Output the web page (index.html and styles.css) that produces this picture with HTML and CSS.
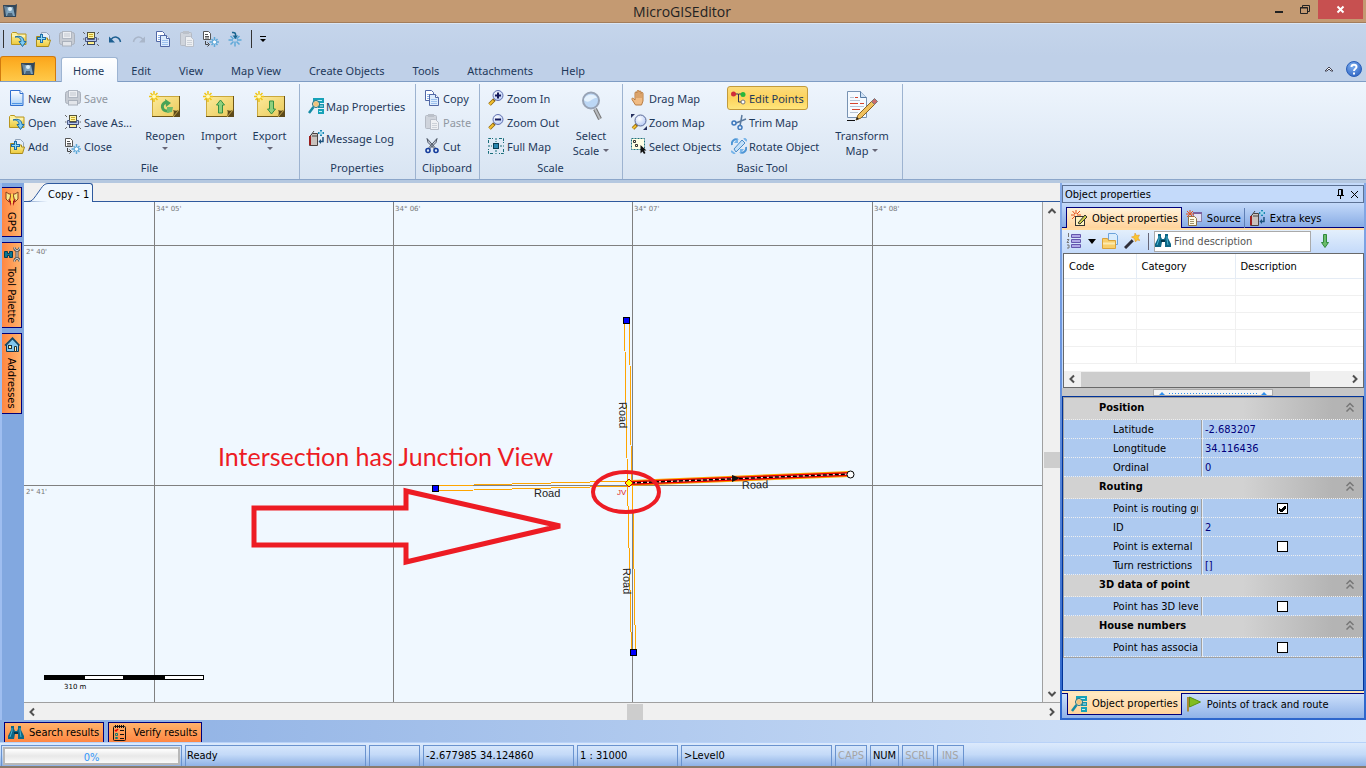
FILE: index.html
```html
<!DOCTYPE html>
<html lang="en">
<head>
    <meta charset="UTF-8">
    <meta name="viewport" content="width=device-width, initial-scale=1.0">
    <title>MicroGISEditor</title>
    <link rel="stylesheet" href="styles.css">
</head>
<body>
    <!-- Icon sprite -->
    <svg class="sprite" xmlns="http://www.w3.org/2000/svg" aria-hidden="true">
        <defs>
            <linearGradient id="g-page" x1="0" y1="0" x2="0" y2="1"><stop offset="0" stop-color="#ffffff"/><stop offset="1" stop-color="#a9d0f7"/></linearGradient>
            <linearGradient id="g-folder" x1="0" y1="0" x2="0" y2="1"><stop offset="0" stop-color="#fff6a8"/><stop offset="1" stop-color="#ecc93c"/></linearGradient>
            <linearGradient id="g-note" x1="0" y1="0" x2="1" y2="1"><stop offset="0" stop-color="#fdeb9c"/><stop offset="1" stop-color="#e9c95a"/></linearGradient>
            <radialGradient id="g-lens" cx=".4" cy=".35" r=".7"><stop offset="0" stop-color="#ffffff"/><stop offset="1" stop-color="#b3c8f5"/></radialGradient>
            <radialGradient id="g-help" cx=".4" cy=".3" r=".8"><stop offset="0" stop-color="#7fb0f0"/><stop offset="1" stop-color="#2a5fc0"/></radialGradient>
        </defs>
        <symbol id="i-app" viewBox="0 0 16 16">
            <path d="M1 2h12l2-1-1 13H2z" fill="#33475a"/><path d="M2 3l2 10h1l1-9z" fill="#6d879c"/><path d="M5 4h6l2 9H4z" fill="#7fa3bd"/><circle cx="8" cy="6" r="2" fill="#dcebf2"/><path d="M6 10h4l1 3H5z" fill="#4b667c"/>
        </symbol>
        <symbol id="i-new" viewBox="0 0 16 16">
            <path d="M1.500 .5h9.500l3 3v12h-12.500z" fill="url(#g-page)" stroke="#2f6fd0"/><path d="M11 .5v3h3" fill="#fff" stroke="#2f6fd0"/><path d="M3 13.500h10" stroke="#4e95e6"/>
        </symbol>
        <symbol id="i-open" viewBox="0 0 16 16">
            <path d="M.5 13.500v-11l1-1h4l1 1.500h8.500v10.500z" fill="url(#g-folder)" stroke="#b89620"/><path d="M1 5h13" stroke="#fffbd0"/><path d="M4 6c4-.5 6 1.500 6 4.500h-2l3.500 5 3.500-5h-2c0-4-3.500-6.500-9-4.500z" fill="#7ecbf2" stroke="#1c6ca3"/>
        </symbol>
        <symbol id="i-add" viewBox="0 0 16 16">
            <path d="M6.500 1.500h5l3 3v6h-8z" fill="#e4eef8" stroke="#93a5bb"/><path d="M1.500 15.500v-10h4l1 1.500h6v2h3l-2 6.500z" fill="url(#g-folder)" stroke="#a98b1c"/><path d="M5 3h3v3h3v3H8v3H5V9H2V6h3z" fill="#1c6ea8"/><path d="M6 4h1v3h3v1H7v3H6V8H3V7h3z" fill="#8edaf8"/>
        </symbol>
        <symbol id="i-save" viewBox="0 0 16 16">
            <rect x=".5" y="1.500" width="15" height="12" rx="2" fill="#c6cbd3" stroke="#aab1bc"/><rect x="3.500" y=".5" width="9" height="7" fill="#eceef2" stroke="#b0b7c2"/><path d="M5 3h6M5 5h6" stroke="#c3c8d0"/><rect x="3.500" y="10.500" width="9" height="4.500" fill="#e2e5ea" stroke="#aab1bc"/>
        </symbol>
        <symbol id="i-saveas" viewBox="0 0 16 16">
            <path d="M0 1l2 2M16 1l-2 2M0 8h1.500M14.500 8h1.500M0 15l2-2M16 15l-2-2" stroke="#666"/><rect x="4.500" y="1.500" width="7" height="6" fill="#fff6a0" stroke="#55523a"/><path d="M6 3.500h4M6 5.500h4" stroke="#caa92c"/><path d="M2.500 6.500h2v2h7v-2h2v4h-11z" fill="#b5c6ee" stroke="#4b5a86"/><rect x="4.500" y="10.500" width="7" height="3" fill="#fff08a" stroke="#3d4660"/>
        </symbol>
        <symbol id="i-close" viewBox="0 0 16 16">
            <path d="M.5 .5h5l2 2v6h-7z" fill="#fff" stroke="#555"/><path d="M2 3.500h3M2 5.500h4M2 7h4" stroke="#555"/><path d="M2.500 10v3.500h3M4.500 11.500l2 2-2 2" fill="none" stroke="#444"/><path d="M11.500 6v3.500M11.500 12.500v3.500M6.500 11h3.500M13 11h3M8.500 8l2 2M14.500 8l-2 2M8.500 14l2-2M14.500 14l-2-2" stroke="#5fa9d8" stroke-width="1.500"/><circle cx="11.500" cy="11" r="1.500" fill="#fff"/>
        </symbol>
        <symbol id="i-star" viewBox="0 0 16 16">
            <path d="M8 5v3M8 10.500v5M1.500 9h4.500M10 9h4.500M3.500 5l3 3M12.500 5l-3 3M3.500 13.500l3-3M12.500 13.500l-3-3" stroke="#5fa9d8" stroke-width="1.500"/><path d="M5 1.500c3-.5 4 1 3.500 3.500" fill="none" stroke="#17648f" stroke-width="1.500"/><path d="M5.500 4.500h5.500L8.500 8z" fill="#17648f"/>
        </symbol>
        <symbol id="i-undo" viewBox="0 0 16 16"><path d="M4 8.500c3-4 8.500-3 9.500 2.500" fill="none" stroke="#1d5f91" stroke-width="1.500"/><path d="M2 5.500v6h6z" fill="#1d5f91"/></symbol>
        <symbol id="i-redo" viewBox="0 0 16 16"><path d="M12 8.500c-3-4-8.500-3-9.500 2.500" fill="none" stroke="#a9b6c9" stroke-width="1.500"/><path d="M14 5.500v6H8z" fill="#a9b6c9"/></symbol>
        <symbol id="i-copy" viewBox="0 0 16 16">
            <path d="M1.500 .5h6l2 2v8h-8z" fill="#fff" stroke="#5168a6"/><path d="M3 4.500h5M3 6.500h5M3 8.500h5" stroke="#8db4ea"/><path d="M5.500 4.500h6l3 3v8h-9z" fill="#dcecfd" stroke="#5168a6"/><path d="M11.500 4.500v3h3" fill="#fff" stroke="#5168a6"/><path d="M7 9.500h6M7 11.500h6M7 13.500h6" stroke="#9cc0ee"/>
        </symbol>
        <symbol id="i-paste" viewBox="0 0 16 16">
            <rect x="1.500" y="1.500" width="11" height="13" rx="1" fill="#cfd4dc" stroke="#b4bac4"/><rect x="4" y="0" width="6" height="3" fill="#bbc1ca"/><path d="M6.500 5.500h5l3 3v7h-8z" fill="#eef0f3" stroke="#b9bfc9"/><path d="M8 9.500h5M8 11.500h5M8 13.500h5" stroke="#cdd2d9"/>
        </symbol>
        <symbol id="i-cut" viewBox="0 0 16 16">
            <path d="M3 .5l1 4 6 6 1-1zM13 .5l-1 4-6 6-1-1z" fill="#c3cad6" stroke="#303848" stroke-width=".8"/><ellipse cx="4" cy="12.500" rx="2" ry="2" fill="none" stroke="#153c9c" stroke-width="1.600"/><ellipse cx="12" cy="12.500" rx="2" ry="2" fill="none" stroke="#153c9c" stroke-width="1.600"/>
        </symbol>
        <symbol id="i-mapprops" viewBox="0 0 16 16">
            <rect x="5" y="0" width="11" height="5" fill="#17a2b8"/><rect x="10" y="6" width="6" height="4" fill="#1993ab"/><rect x="10" y="11" width="6" height="5" fill="#17a2b8"/><path d="M7 2.500h7M12 8h3M11 13.500h3" stroke="#bff1f8"/><circle cx="8" cy="6" r="3.500" fill="#ffe2ac" stroke="#176c87"/><path d="M6 5h4M6 7h4" stroke="#e2a54f"/><path d="M5.500 9L1 15" stroke="#148aa4" stroke-width="2.500"/>
        </symbol>
        <symbol id="i-log" viewBox="0 0 16 16">
            <path d="M1.500 6.500l3-3h5v12h-8z" fill="#c9c2bd" stroke="#4c4240"/><rect x="1" y="6" width="2" height="9" fill="#9c1e1e"/><path d="M3 5l3-4M4 6h6" stroke="#444"/><path d="M12 0h2v2h2v2h-2v2h-2V4h-2V2h2z" fill="#1b86b4"/><path d="M13 1v4M11 3h4" stroke="#c9f2ff"/><path d="M15 7v4.500h-3" fill="none" stroke="#1d527d" stroke-width="1.500"/><path d="M13 9v5l-2.500-2.500z" fill="#1d527d"/>
        </symbol>
        <symbol id="i-zoomin" viewBox="0 0 16 16">
            <path d="M1.500 14.500l5-5" stroke="#8d6510" stroke-width="3.500"/><path d="M1.500 14.500l4-4" stroke="#f3c02f" stroke-width="2"/><circle cx="10" cy="5.500" r="5" fill="url(#g-lens)" stroke="#6272b0"/><path d="M10 2.500v6M7 5.500h6" stroke="#141a5c" stroke-width="2"/>
        </symbol>
        <symbol id="i-zoomout" viewBox="0 0 16 16">
            <path d="M1.500 14.500l5-5" stroke="#8d6510" stroke-width="3.500"/><path d="M1.500 14.500l4-4" stroke="#f3c02f" stroke-width="2"/><circle cx="10" cy="5.500" r="5" fill="url(#g-lens)" stroke="#6272b0"/><path d="M7 5.500h6" stroke="#141a5c" stroke-width="2"/>
        </symbol>
        <symbol id="i-fullmap" viewBox="0 0 16 16">
            <path d="M.5 5v-4.500h4.500M11 .5h4.500v4.500M15.500 11v4.500h-4.500M5 15.500h-4.500v-4.500" fill="none" stroke="#176d79" stroke-dasharray="3 1"/><path d="M8 0v4M8 12v4M0 8h4M12 8h4" stroke="#176d79" stroke-dasharray="2 1"/><rect x="5.500" y="5.500" width="5" height="5" fill="#2c87b0" stroke="#0c3e55"/>
        </symbol>
        <symbol id="i-hand" viewBox="0 0 16 16">
            <path d="M4.500 15L1 9.500c-.5-1.500 1-2 2-.5l1 1V3c0-1.500 2-1.500 2 0V1.500c0-1.500 2-1.500 2 0V2c0-1.500 2-1.500 2 0v1.500c0-1.500 2-1.500 2 0V11l-1.500 4z" fill="#f0bb84" stroke="#b97c42"/><path d="M6 3v5M8 2v6M10 3v5" stroke="#c58b52"/>
        </symbol>
        <symbol id="i-zoommap" viewBox="0 0 16 16">
            <path d="M0 0h4L0 4zM16 16h-4l4-4z" fill="#26305e"/><path d="M2 14.500l4-4" stroke="#8d6510" stroke-width="3.500"/><path d="M2 14.500l3-3" stroke="#f3c02f" stroke-width="2"/><circle cx="9.500" cy="6.500" r="5.500" fill="url(#g-lens)" stroke="#5a6896"/>
        </symbol>
        <symbol id="i-select" viewBox="0 0 16 16">
            <rect x=".5" y=".5" width="13" height="11" fill="#ffffe4" stroke="#1b6f7c" stroke-dasharray="2 1"/><path d="M2.500 2.500h2v2h-2zM4.500 6.500h2v2h-2z" fill="none" stroke="#333"/><path d="M9.500 7l6 5.500h-2.500l1.500 2.500-1.500 1-1.500-2.500-2 2z" fill="#111"/>
        </symbol>
        <symbol id="i-points" viewBox="0 0 16 16">
            <path d="M3 4h4.500v8h4M8 4h4" fill="none" stroke="#335"/><circle cx="2.500" cy="4" r="2.500" fill="#d12b3a"/><circle cx="12" cy="4.500" r="2.500" fill="#27b73b"/><circle cx="12" cy="12" r="2" fill="#fff" stroke="#777"/>
        </symbol>
        <symbol id="i-trim" viewBox="0 0 16 16">
            <path d="M5 9l10-4M9 12L11 1" stroke="#5a7a9e" stroke-width="1.500"/><circle cx="3" cy="9" r="2" fill="none" stroke="#3e79bd" stroke-width="1.500"/><circle cx="9" cy="13.500" r="2" fill="none" stroke="#3e79bd" stroke-width="1.500"/>
        </symbol>
        <symbol id="i-rotate" viewBox="0 0 16 16">
            <path d="M3 11l8-9 3 3-9 9z" fill="#c3e0f8" stroke="#4a8cc8"/><path d="M1 7c-1-4 3-7 6-5M15 9c1 4-3 7-6 5" fill="none" stroke="#4e96d6" stroke-width="2"/><path d="M7 0v5H3zM9 16v-5h4z" fill="#77b5ea"/><path d="M0 13l4 3M13 0l3 3" stroke="#77b5ea" stroke-width="2"/>
        </symbol>
        <symbol id="i-note" viewBox="0 0 32 32">
            <path d="M3 6h28v15l-7 6H3z" fill="url(#g-note)"/><path d="M3.500 6v20M3 6.500h27" stroke="#cba93c" fill="none"/><path d="M30.500 6v21M3 26.500h28" stroke="#6e5617" fill="none"/><path d="M24 27c1-4 1-6 0-7 3 1 5 1 7-1v8z" fill="#5d4a1b"/><path d="M24 27l6-7" stroke="#c8a94a"/>
            <path d="M5 1v11M0 6.500h10M1.500 3l7 7M8.500 3l-7 7" stroke="#f0c516" stroke-width="1.500"/><circle cx="5" cy="6.500" r="2" fill="#fffbb8"/>
        </symbol>
        <symbol id="i-reopen" viewBox="0 0 32 32"><use href="#i-note"/><path d="M20 21c-8 1-9-8-2-9" fill="none" stroke="#4aa356" stroke-width="3"/><path d="M16 9l6 4-5 4z" fill="#4aa356"/><path d="M18 17h6l-1 5-5 1z" fill="#6dbb6d"/></symbol>
        <symbol id="i-import" viewBox="0 0 32 32"><use href="#i-note"/><path d="M17.500 10l4 5h-2v8h-4v-8h-2z" fill="#8fd07d" stroke="#349044"/></symbol>
        <symbol id="i-export" viewBox="0 0 32 32"><use href="#i-note"/><path d="M17.500 24l4-5h-2v-8h-4v8h-2z" fill="#8fd07d" stroke="#349044"/></symbol>
        <symbol id="i-scale" viewBox="0 0 32 32">
            <path d="M20 19l5 10" stroke="#777" stroke-width="4"/><path d="M20 19l5 10" stroke="#b9bcc0" stroke-width="2"/><circle cx="16" cy="10.500" r="8" fill="#bcd7f5" stroke="#98a3b5" stroke-width="2"/><path d="M9 10c1-6 11-7 13-2-4 0-5 2-7 3-2 1-4 1-6-1z" fill="#e6f2fd"/>
        </symbol>
        <symbol id="i-transform" viewBox="0 0 32 32">
            <path d="M1.500 1.500h13l6 6v20h-19z" fill="#f5faff" stroke="#7893b3"/><path d="M14.500 1.500v6h6" fill="#cfe2f6" stroke="#5479a3"/><path d="M9 7.500h3M4 13.500h8M14 13.500h4M6 19.500h8" stroke="#d6432d"/><path d="M4 7.500h4M4 10.500h10M4 16.500h14M4 22.500h8" stroke="#b7c4d4"/><path d="M1 30.500h8" stroke="#111"/><path d="M10 30l2-5L26 11l3 3-14 14z" fill="#f0c15e" stroke="#8b6321"/><path d="M25.500 11.500l3-3 3 3-3 3z" fill="#cc6b6b" stroke="#777"/><path d="M10 30l1-3 2 2z" fill="#222"/>
        </symbol>
        <symbol id="i-gps" viewBox="0 0 16 16">
            <path d="M2 1l3 2h2l-2 8-3-3zM14 1l-3 2H9l2 8 3-3z" fill="#f8e98a" stroke="#8a3e1f"/><path d="M7 3h2v9H7z" fill="#ffd64a"/><path d="M4 8l3 2v5zM12 8l-3 2v5z" fill="#a81616"/>
        </symbol>
        <symbol id="i-tools" viewBox="0 0 16 16">
            <path d="M.5 5.500h3v2h2v-2h3v6h-3v-2h-2v2h-3z" fill="#0c7791" stroke="#073d52"/><path d="M13 4v9" stroke="#555" stroke-width="3"/><path d="M13 4v9" stroke="#ddd"/><path d="M10.500 1.500c0 4 5 4 5 0M10.500 15.500c0-4 5-4 5 0" fill="none" stroke="#555" stroke-width="2.500"/><path d="M10.500 1.500c0 4 5 4 5 0M10.500 15.500c0-4 5-4 5 0" fill="none" stroke="#e4e4e4"/>
        </symbol>
        <symbol id="i-house" viewBox="0 0 16 16">
            <path d="M2.500 8v6.500h12V8l-6-6z" fill="#82c7ec" stroke="#0b3b5c"/><path d="M1 8.500l7.500-7.500 7 7.500" fill="none" stroke="#104766" stroke-width="1.500"/><rect x="4.500" y="8.500" width="3" height="3" fill="#fff7a6" stroke="#22323c"/><path d="M10.500 14.500v-5h2v5z" fill="#fff6b4" stroke="#22323c"/>
        </symbol>
        <symbol id="i-binoc" viewBox="0 0 16 16">
            <path d="M3 1h3v3l1 2h2l1-2V1h3v4l3 6v3h-6V9H7l-1 5H0v-3l3-6z" fill="#0d6685"/><path d="M4 3v3l-2 6M12 3v3l1 6" fill="none" stroke="#49b3d2"/><path d="M6 8h4" stroke="#03364a" stroke-width="2"/>
        </symbol>
        <symbol id="i-verify" viewBox="0 0 16 16">
            <rect x="1.500" y="1.500" width="12" height="14" rx="1" fill="none" stroke="#111"/><path d="M3.500 0v3M5.500 0v3M7.500 0v3M9.500 0v3M11.500 0v3" stroke="#111"/><path d="M3 5l1 1 2-2" fill="none" stroke="#e00" stroke-width="1.500"/><path d="M8 5.500h4M8 9.500h4M8 13.500h4" stroke="#111"/><path d="M3.500 8.500h2v2h-2zM3.500 12.500h2v1h-2z" fill="none" stroke="#127b72"/>
        </symbol>
        <symbol id="i-objprops" viewBox="0 0 16 16">
            <path d="M5 0v4M0 5h4M6 5h4M1.500 1l2.500 3M9 1L6 4M1 9l3-3" stroke="#e3501c"/><rect x="4.500" y="6.500" width="9" height="9" fill="#fff4bf" stroke="#333"/><path d="M7 13l7-8 2 2-7 7z" fill="#cbcf4a" stroke="#333"/>
        </symbol>
        <symbol id="i-source" viewBox="0 0 16 16">
            <rect x="7.500" y="2.500" width="8" height="9" fill="#e4e0f2" stroke="#8c7da5"/><path d="M7 3h9" stroke="#7b61a0" stroke-width="2"/><path d="M2.500 6.500h6l2 2v7h-8z" fill="#fffbe3" stroke="#8c7146"/><path d="M4 9.500h4M4 11.500h4M4 13.500h4" stroke="#a0906a"/><path d="M4 0v4M0 4h8M1 1l6 6M7 1L1 7" stroke="#e3501c"/>
        </symbol>
        <symbol id="i-list" viewBox="0 0 16 16">
            <path d="M5.500 1.500h9v3h-9zM5.500 6.500h9v3h-9zM5.500 11.500h9v3h-9z" fill="#b0a7e6" stroke="#6456ae"/><path d="M2.500 0v4M1 6.500h2l-2 3h2M1 12h2v3h-2" fill="none" stroke="#777"/>
        </symbol>
        <symbol id="i-folder" viewBox="0 0 16 16">
            <path d="M6.500 .5h7l2 2v9h-9z" fill="#d9ecfc" stroke="#6da3da"/><path d="M.5 5.500h5l1 2h7v8H.5z" fill="#f9cf6a" stroke="#d9a23c"/><path d="M1 10.500h12" stroke="#fdeab0" stroke-width="2"/>
        </symbol>
        <symbol id="i-wand" viewBox="0 0 16 16">
            <path d="M1 15L9 7" stroke="#2f2f3a" stroke-width="3"/><path d="M9 7.500l1.500-1.500" stroke="#ddd" stroke-width="3"/><path d="M11 0l1.500 2.500 3-.5-1.500 3 2 2.500-3-.5-1.500 2-1-3.500-3-1.500 3-1z" fill="#f9c62e" stroke="#e58f1b" stroke-width=".5"/>
        </symbol>
        <symbol id="i-down" viewBox="0 0 16 16"><path d="M6.500 1.500h3v8h2l-3.500 5-3.500-5h2z" fill="#6abb6a" stroke="#2f8a3b"/></symbol>
        <symbol id="i-flag" viewBox="0 0 16 16"><path d="M2 1v14.500" stroke="#a98a3a" stroke-width="2"/><path d="M3.500 1l11 5-11 5z" fill="#82bd1f" stroke="#5a9311"/></symbol>
        <symbol id="i-chev" viewBox="0 0 10 10"><path d="M1.500 5L5 1.500 8.500 5M1.500 9.500L5 6l3.500 3.500" fill="none" stroke="#777" stroke-width="1.500"/></symbol>
        <symbol id="i-left" viewBox="0 0 10 10"><path d="M7 1.500L3.500 5 7 8.500" fill="none" stroke="#505050" stroke-width="2"/></symbol>
        <symbol id="i-right" viewBox="0 0 10 10"><path d="M3 1.500L6.500 5 3 8.500" fill="none" stroke="#505050" stroke-width="2"/></symbol>
        <symbol id="i-up" viewBox="0 0 10 10"><path d="M1.500 7L5 3.500 8.500 7" fill="none" stroke="#505050" stroke-width="2"/></symbol>
        <symbol id="i-dn" viewBox="0 0 10 10"><path d="M1.500 3L5 6.500 8.500 3" fill="none" stroke="#505050" stroke-width="2"/></symbol>
    </svg>

    <header class="titlebar">
        <svg class="icon title-icon"><use href="#i-app"/></svg>
        <h1 class="title">MicroGISEditor</h1>
        <div class="window-buttons">
            <button class="window-button" aria-label="Minimize"><svg width="10" height="10"><path d="M1 7h8" stroke="#222" stroke-width="2"/></svg></button>
            <button class="window-button" aria-label="Restore"><svg width="10" height="10"><path d="M.5 2.500h7v6h-7zM2.500 2.500v-2h7v6h-2M0 3h8" fill="none" stroke="#222"/></svg></button>
            <button class="window-button window-close" aria-label="Close"><svg width="10" height="10"><path d="M1.500 1.500l6 6M7.500 1.500l-6 6" stroke="#fff" stroke-width="2"/></svg></button>
        </div>
    </header>

    <div class="quickbar">
        <span class="quick-sep"></span>
        <button aria-label="Open"><svg class="icon"><use href="#i-open"/></svg></button>
        <button aria-label="Add"><svg class="icon"><use href="#i-add"/></svg></button>
        <button aria-label="Save" disabled><svg class="icon"><use href="#i-save"/></svg></button>
        <button aria-label="Save as"><svg class="icon"><use href="#i-saveas"/></svg></button>
        <button aria-label="Undo"><svg class="icon"><use href="#i-undo"/></svg></button>
        <button aria-label="Redo" disabled><svg class="icon"><use href="#i-redo"/></svg></button>
        <button aria-label="Copy"><svg class="icon"><use href="#i-copy"/></svg></button>
        <button aria-label="Paste" disabled><svg class="icon"><use href="#i-paste"/></svg></button>
        <button aria-label="Close map"><svg class="icon"><use href="#i-close"/></svg></button>
        <button aria-label="Collapse"><svg class="icon"><use href="#i-star"/></svg></button>
        <span class="quick-sep"></span>
        <button class="customize" aria-label="Customize"><svg width="8" height="8"><path d="M1 1.500h6" stroke="#000"/><path d="M1 4h6L4 7z"/></svg></button>
    </div>

    <nav class="tabs">
        <button class="app-button" aria-label="Application menu"><svg class="icon"><use href="#i-app"/></svg></button>
        <button class="tab selected">Home</button>
        <button class="tab">Edit</button>
        <button class="tab">View</button>
        <button class="tab">Map View</button>
        <button class="tab">Create Objects</button>
        <button class="tab">Tools</button>
        <button class="tab">Attachments</button>
        <button class="tab">Help</button>
        <div class="tabs-end">
            <button aria-label="Minimize ribbon"><svg width="10" height="8"><path d="M1 6l4-4 4 4-2 0-2-2-2 2z" fill="#fff" stroke="#445"/></svg></button>
            <button aria-label="Help"><svg width="16" height="16"><circle cx="8" cy="8" r="7.500" fill="url(#g-help)" stroke="#2a5fb8"/><path d="M5.500 6c0-3 5-3 5 0 0 2-2.500 1.500-2.500 4M8 11.500v2" fill="none" stroke="#fff" stroke-width="2"/></svg></button>
        </div>
    </nav>

    <div class="ribbon">
        <section class="group group-file">
            <div class="group-body">
                <div class="col">
                    <button class="cmd"><svg class="icon"><use href="#i-new"/></svg>New</button>
                    <button class="cmd"><svg class="icon"><use href="#i-open"/></svg>Open</button>
                    <button class="cmd"><svg class="icon"><use href="#i-add"/></svg>Add</button>
                </div>
                <div class="col">
                    <button class="cmd" disabled><svg class="icon"><use href="#i-save"/></svg>Save</button>
                    <button class="cmd"><svg class="icon"><use href="#i-saveas"/></svg>Save As...</button>
                    <button class="cmd"><svg class="icon"><use href="#i-close"/></svg>Close</button>
                </div>
                <button class="big"><svg class="icon-big"><use href="#i-reopen"/></svg>Reopen<span class="arrow"></span></button>
                <button class="big"><svg class="icon-big"><use href="#i-import"/></svg>Import<span class="arrow"></span></button>
                <button class="big"><svg class="icon-big"><use href="#i-export"/></svg>Export<span class="arrow"></span></button>
            </div>
            <h2 class="group-title">File</h2>
        </section>
        <section class="group group-properties">
            <div class="group-body">
                <div class="col col-two">
                    <button class="cmd"><svg class="icon"><use href="#i-mapprops"/></svg>Map Properties</button>
                    <button class="cmd"><svg class="icon"><use href="#i-log"/></svg>Message Log</button>
                </div>
            </div>
            <h2 class="group-title">Properties</h2>
        </section>
        <section class="group group-clipboard">
            <div class="group-body">
                <div class="col">
                    <button class="cmd"><svg class="icon"><use href="#i-copy"/></svg>Copy</button>
                    <button class="cmd" disabled><svg class="icon"><use href="#i-paste"/></svg>Paste</button>
                    <button class="cmd"><svg class="icon"><use href="#i-cut"/></svg>Cut</button>
                </div>
            </div>
            <h2 class="group-title">Clipboard</h2>
        </section>
        <section class="group group-scale">
            <div class="group-body">
                <div class="col">
                    <button class="cmd"><svg class="icon"><use href="#i-zoomin"/></svg>Zoom In</button>
                    <button class="cmd"><svg class="icon"><use href="#i-zoomout"/></svg>Zoom Out</button>
                    <button class="cmd"><svg class="icon"><use href="#i-fullmap"/></svg>Full Map</button>
                </div>
                <button class="big"><svg class="icon-big"><use href="#i-scale"/></svg>Select<span class="big-line">Scale <span class="arrow"></span></span></button>
            </div>
            <h2 class="group-title">Scale</h2>
        </section>
        <section class="group group-tool">
            <div class="group-body">
                <div class="col">
                    <button class="cmd"><svg class="icon"><use href="#i-hand"/></svg>Drag Map</button>
                    <button class="cmd"><svg class="icon"><use href="#i-zoommap"/></svg>Zoom Map</button>
                    <button class="cmd"><svg class="icon"><use href="#i-select"/></svg>Select Objects</button>
                </div>
                <div class="col">
                    <button class="cmd active"><svg class="icon"><use href="#i-points"/></svg>Edit Points</button>
                    <button class="cmd"><svg class="icon"><use href="#i-trim"/></svg>Trim Map</button>
                    <button class="cmd"><svg class="icon"><use href="#i-rotate"/></svg>Rotate Object</button>
                </div>
                <button class="big"><svg class="icon-big"><use href="#i-transform"/></svg>Transform<span class="big-line">Map <span class="arrow"></span></span></button>
            </div>
            <h2 class="group-title">Basic Tool</h2>
        </section>
    </div>

    <main class="workspace">
        <aside class="dock-left">
            <button class="side-button"><svg class="icon"><use href="#i-gps"/></svg>GPS</button>
            <button class="side-button"><svg class="icon"><use href="#i-tools"/></svg>Tool Palette</button>
            <button class="side-button"><svg class="icon"><use href="#i-house"/></svg>Addresses</button>
        </aside>

        <section class="document">
            <div class="doc-tabs">
                <button class="doc-tab"><svg width="20" height="19"><path d="M0 18.500c4 0 5-2 8-6l5-7c2-3 4-5 7-5v18.500z" fill="#f0f8ff"/><path d="M0 18.500c4 0 5-2 8-6l5-7c2-3 4-5 7-5" fill="none" stroke="#2f5a9e"/></svg><span>Copy - 1</span></button>
            </div>
            <svg class="map" viewBox="24 202 1018 500" preserveAspectRatio="xMinYMin slice">
                <g stroke="#808080" shape-rendering="crispEdges">
                    <path d="M154.500 202v500M393.500 202v500M632.500 202v500M872.500 202v500M24 245.500h1018M24 485.500h1018"/>
                </g>
                <g class="coord">
                    <text x="156" y="211">34° 05'</text>
                    <text x="395" y="211">34° 06'</text>
                    <text x="634" y="211">34° 07'</text>
                    <text x="874" y="211">34° 08'</text>
                    <text x="26" y="254">2° 40'</text>
                    <text x="26" y="494">2° 41'</text>
                </g>
                <!-- roads -->
                <g fill="none" stroke="#ffa500" shape-rendering="crispEdges">
                    <path d="M624.500 324L627.500 484M629.500 324L631.500 484M627.500 484L631.500 652M632.500 484L635.500 652"/>
                    <path d="M435 486L629 481M435 491L629 486"/>
                </g>
                <path d="M631 483L850 474" stroke="#ffa500" stroke-width="6"/>
                <path d="M631 483L850 474" stroke="#e80000" stroke-width="4"/>
                <path d="M631 483L850 474" stroke="#fff" stroke-width="1"/>
                <path d="M631 483L850 474" stroke="#000" stroke-width="1.500" stroke-dasharray="4 2"/>
                <path d="M732 475l8 3-8 4z" fill="#111"/>
                <g fill="#0000ff" stroke="#000" shape-rendering="crispEdges">
                    <rect x="623.500" y="317.500" width="6" height="6"/>
                    <rect x="432.500" y="485.500" width="6" height="6"/>
                    <rect x="630.500" y="649.500" width="6" height="6"/>
                </g>
                <circle cx="850.500" cy="474.500" r="3.500" fill="#fff" stroke="#000"/>
                <path d="M629 479l4 4-4 4-4-4z" fill="#ffff00" stroke="#c80000"/>
                <g class="road-name">
                    <text x="534" y="497">Road</text>
                    <text x="742" y="489" transform="rotate(-2 742 489)">Road</text>
                    <text x="619" y="402" transform="rotate(89 619 402)">Road</text>
                    <text x="623" y="568" transform="rotate(89 623 568)">Road</text>
                </g>
                <text class="jv" x="617" y="495">JV</text>
                <!-- annotation -->
                <g fill="none" stroke="#ed1c24">
                    <ellipse cx="626" cy="492" rx="33" ry="20" stroke-width="4"/>
                    <path d="M254 508H406V491L560 526 406 562V545H254z" stroke-width="5"/>
                </g>
                <text class="note" x="218" y="466">Intersection has Junction View</text>
                <!-- scale bar -->
                <g shape-rendering="crispEdges">
                    <rect x="44.500" y="675.500" width="159" height="4" fill="#fff" stroke="#000"/>
                    <rect x="44" y="675" width="41" height="5"/>
                    <rect x="123" y="675" width="42" height="5"/>
                </g>
                <text class="scale-label" x="64" y="689">310 m</text>
            </svg>
            <div class="scroll-v">
                <button aria-label="Scroll up"><svg class="scroll-icon"><use href="#i-up"/></svg></button>
                <span class="thumb"></span>
                <button aria-label="Scroll down"><svg class="scroll-icon"><use href="#i-dn"/></svg></button>
            </div>
            <div class="scroll-h">
                <button aria-label="Scroll left"><svg class="scroll-icon"><use href="#i-left"/></svg></button>
                <span class="thumb"></span>
                <button aria-label="Scroll right"><svg class="scroll-icon"><use href="#i-right"/></svg></button>
            </div>
        </section>

        <aside class="panel">
            <header class="panel-title">
                <h2>Object properties</h2>
                <button aria-label="Pin"><svg width="9" height="10"><path d="M2.500 6V.5h4V6M1 6.500h7M4.500 6v4M5.500 1v5" fill="none" stroke="#000"/></svg></button>
                <button aria-label="Close panel"><svg width="9" height="9"><path d="M1 1l7 7M8 1L1 8" stroke="#000"/></svg></button>
            </header>
            <div class="panel-tabs">
                <button class="panel-tab selected"><svg class="icon"><use href="#i-objprops"/></svg>Object properties</button>
                <button class="panel-tab"><svg class="icon"><use href="#i-source"/></svg>Source</button>
                <button class="panel-tab with-sep"><svg class="icon"><use href="#i-log"/></svg>Extra keys</button>
            </div>
            <div class="panel-tools">
                <button aria-label="List"><svg class="icon"><use href="#i-list"/></svg></button>
                <button aria-label="List options"><svg width="8" height="5"><path d="M0 0h8L4 5z"/></svg></button>
                <button aria-label="Open folder"><svg class="icon"><use href="#i-folder"/></svg></button>
                <button aria-label="Wizard"><svg class="icon"><use href="#i-wand"/></svg></button>
                <span class="tool-sep"></span>
                <label class="search"><svg class="icon"><use href="#i-binoc"/></svg><input type="text" placeholder="Find description" aria-label="Find description"></label>
                <button aria-label="Find next"><svg class="icon"><use href="#i-down"/></svg></button>
            </div>
            <div class="list">
                <table class="list-table">
                    <thead>
                        <tr><th class="c-code">Code</th><th class="c-category">Category</th><th>Description</th></tr>
                    </thead>
                    <tbody>
                        <tr><td></td><td></td><td></td></tr>
                        <tr><td></td><td></td><td></td></tr>
                        <tr><td></td><td></td><td></td></tr>
                        <tr><td></td><td></td><td></td></tr>
                        <tr><td></td><td></td><td></td></tr>
                    </tbody>
                </table>
                <div class="scroll-h list-scroll">
                    <button aria-label="Scroll left"><svg class="scroll-icon"><use href="#i-left"/></svg></button>
                    <span class="thumb"></span>
                    <button aria-label="Scroll right"><svg class="scroll-icon"><use href="#i-right"/></svg></button>
                </div>
            </div>
            <div class="splitter"><button aria-label="Collapse list"><svg width="108" height="4"><path d="M0 4l3-3 3 3zM102 4l3-3 3 3z" fill="#2e90f0"/><path d="M10 2.500h88" stroke="#2e90f0" stroke-dasharray="1 2"/></svg></button></div>
            <div class="props">
                <table class="props-table">
                    <colgroup><col class="c-name"><col></colgroup>
                    <tbody>
                        <tr class="category"><th colspan="2"><div>Position<svg class="chev"><use href="#i-chev"/></svg></div></th></tr>
                        <tr><th>Latitude</th><td>-2.683207</td></tr>
                        <tr><th>Longtitude</th><td>34.116436</td></tr>
                        <tr><th>Ordinal</th><td>0</td></tr>
                        <tr class="category"><th colspan="2"><div>Routing<svg class="chev"><use href="#i-chev"/></svg></div></th></tr>
                        <tr><th><label for="routing-graph">Point is routing gr</label></th><td class="check"><input type="checkbox" id="routing-graph" checked></td></tr>
                        <tr><th>ID</th><td>2</td></tr>
                        <tr><th><label for="external">Point is external</label></th><td class="check"><input type="checkbox" id="external"></td></tr>
                        <tr><th>Turn restrictions</th><td>[]</td></tr>
                        <tr class="category"><th colspan="2"><div>3D data of point<svg class="chev"><use href="#i-chev"/></svg></div></th></tr>
                        <tr><th><label for="level-3d">Point has 3D level</label></th><td class="check"><input type="checkbox" id="level-3d"></td></tr>
                        <tr class="category"><th colspan="2"><div>House numbers<svg class="chev"><use href="#i-chev"/></svg></div></th></tr>
                        <tr><th><label for="associated">Point has associat</label></th><td class="check"><input type="checkbox" id="associated"></td></tr>
                    </tbody>
                </table>
            </div>
            <div class="panel-bottom">
                <button class="panel-tab selected"><svg class="icon"><use href="#i-mapprops"/></svg>Object properties</button>
                <button class="panel-tab"><svg class="icon"><use href="#i-flag"/></svg>Points of track and route</button>
            </div>
        </aside>
    </main>

    <div class="dock-bottom">
        <button class="dock-button"><svg class="icon"><use href="#i-binoc"/></svg>Search results</button>
        <button class="dock-button"><svg class="icon"><use href="#i-verify"/></svg>Verify results</button>
    </div>

    <footer class="status">
        <div class="cell cell-progress"><div class="progress">0%</div></div>
        <div class="cell cell-ready">Ready</div>
        <div class="cell cell-empty"></div>
        <div class="cell cell-coord">-2.677985 34.124860</div>
        <div class="cell cell-ratio">1 : 31000</div>
        <div class="cell cell-level">&gt;Level0</div>
        <div class="cell key off">CAPS</div>
        <div class="cell key">NUM</div>
        <div class="cell key off">SCRL</div>
        <div class="cell key off">INS</div>
    </footer>
</body>
</html>
```

FILE: styles.css
```css
* {
    box-sizing: border-box;
}
body {
    margin: 0;
    height: 100vh;
    display: flex;
    flex-direction: column;
    overflow: hidden;
    font-family: "DejaVu Sans Condensed", "Noto Sans", sans-serif;
    font-size: 11px;
    color: #000;
    background-color: #bfd0e8;
    border-bottom: 2px solid #8b7a6c;
}
button {
    font: inherit;
    color: inherit;
    border: none;
    background: none;
    padding: 0;
    margin: 0;
    white-space: nowrap;
}
h1, h2 {
    margin: 0;
    font-weight: normal;
    font-size: inherit;
}
svg {
    display: block;
    flex: none;
}
.sprite {
    position: absolute;
    width: 0;
    height: 0;
}
.icon {
    width: 16px;
    height: 16px;
}
.icon-big {
    width: 32px;
    height: 32px;
}

/* Title bar */
.titlebar {
    display: flex;
    align-items: center;
    height: 23px;
    flex: none;
    background-color: #c49a72;
    border-bottom: 1px solid #a37d5b;
    font-family: "Open Sans", sans-serif;
}
.title-icon {
    margin-left: 2px;
}
.title {
    flex: 1;
    padding-left: 80px;
    text-align: center;
    font-size: 14px;
    color: #222;
}
.window-buttons {
    display: flex;
    align-self: flex-start;
    padding-right: 3px;
}
.window-button {
    width: 26px;
    height: 19px;
    display: flex;
    align-items: center;
    justify-content: center;
}
.window-close {
    width: 45px;
    background-color: #c75050;
}

/* Quick access bar */
.quickbar {
    display: flex;
    align-items: center;
    gap: 8px;
    height: 33px;
    flex: none;
    padding: 0 0 2px 3px;
    background: linear-gradient(#c5d5eb, #bfd0e8);
    border-top: 1px solid #d9e6f5;
}
.quick-sep {
    width: 1px;
    height: 18px;
    margin-right: -1px;
    background-color: #333;
}

/* Ribbon tabs */
.tabs {
    display: flex;
    height: 26px;
    flex: none;
    border-bottom: 1px solid #7f9dc4;
    font-family: "Noto Sans", sans-serif;
    color: #1e395b;
}
.app-button {
    width: 56px;
    margin-right: 5px;
    display: flex;
    align-items: center;
    justify-content: center;
    border: 1px solid #d17a0e;
    border-bottom: none;
    border-radius: 3px 3px 0 0;
    background: linear-gradient(#fba51c, #fdb52c 40%, #ffc94a);
}
.tab {
    padding: 3px 15px 0 13px;
    margin-top: 1px;
}
.tab.selected {
    margin-bottom: -1px;
    border: 1px solid #9db4d2;
    border-bottom: none;
    border-radius: 3px 3px 0 0;
    background: linear-gradient(#ffffff, #eef5fd);
    padding: 0 13px 0 11px;
}
.tabs-end {
    display: flex;
    align-items: center;
    gap: 12px;
    margin-left: auto;
    padding-right: 4px;
}

/* Ribbon */
.ribbon {
    display: flex;
    height: 101px;
    flex: none;
    background: linear-gradient(#eef5fd, #d8e4f2 97px);
    border-bottom: 3px solid #b5c8e0;
    box-shadow: inset 0 -1px 0 #8ba6ca;
    font-family: "Noto Sans", sans-serif;
    color: #1e395b;
}
.group {
    display: flex;
    flex-direction: column;
    margin: 2px 0 1px;
    padding-top: 2px;
    padding-left: 7px;
    border-right: 1px solid #9db3d0;
}
.group-file {
    width: 300px;
    padding-left: 8px;
}
.group-properties {
    width: 116px;
}
.group-clipboard {
    width: 64px;
}
.group-scale {
    width: 143px;
}
.group-tool {
    width: 280px;
}
.group-body {
    display: flex;
    height: 72px;
}
.group-title {
    text-align: center;
    line-height: 20px;
    margin-left: -8px;
}
.col {
    display: flex;
    flex-direction: column;
    align-items: flex-start;
}
.col-two {
    gap: 8px;
    padding-top: 8px;
}
.group-file .col {
    width: 74px;
}
.group-file .col:first-child {
    width: 56px;
}
.group-scale .col {
    width: 77px;
}
.group-tool .col {
    width: 97px;
}
.group-tool .col + .col {
    width: 104px;
}
.cmd {
    display: flex;
    align-items: center;
    gap: 3px;
    height: 24px;
    padding: 0 1px;
}
.group-properties .cmd, .group-tool .cmd {
    gap: 2px;
}
.group-tool .col + .col .cmd {
    padding: 0 4px;
}
.cmd:disabled {
    color: #9097a1;
}
.group-tool .col + .col .cmd.active {
    border: 1px solid #c29b3c;
    border-radius: 3px;
    padding: 0 3px;
    background: linear-gradient(#fbdc7c, #fdd25c 50%, #ffe67c);
}
.big {
    display: flex;
    flex-direction: column;
    align-items: center;
    line-height: 15px;
    width: 54px;
    padding-top: 4px;
}
.big .icon-big {
    margin-bottom: 6px;
}
.group-file .big:last-child {
    width: 47px;
}
.group-tool .big {
    width: 62px;
}
.big-line {
    display: flex;
    align-items: center;
    gap: 4px;
}
.arrow {
    border: 3px solid transparent;
    border-top-color: #667;
    border-bottom: none;
}
.big > .arrow {
    margin-top: 4px;
}

/* Workspace */
.workspace {
    display: flex;
    flex: 1;
    min-height: 0;
}
.dock-left {
    width: 24px;
    flex: none;
    display: flex;
    flex-direction: column;
    gap: 5px;
    padding-top: 4px;
    background-color: #82a8e0;
    border-left: 2px solid #9fbef0;
}
.side-button {
    display: flex;
    align-items: center;
    gap: 5px;
    width: 20px;
    padding: 3px 0 4px;
    writing-mode: vertical-rl;
    border: 1px solid #00007b;
    border-left: none;
    background: linear-gradient(to right, #ff8642, #ffb36b);
}
.document {
    flex: 1;
    min-width: 0;
    display: grid;
    grid-template-columns: 1fr 18px;
    grid-template-rows: 19px 1fr 18px;
    background-color: #f0f0f0;
}
.doc-tabs {
    grid-column: 1 / 3;
    display: flex;
    padding-left: 4px;
    border-bottom: 1px solid #2f5a9e;
}
.doc-tab {
    display: flex;
    margin-bottom: -1px;
    height: 19px;
}
.doc-tab span {
    height: 19px;
    line-height: 21px;
    padding-right: 3px;
    border-top: 1px solid #2f5a9e;
    border-right: 1px solid #2f5a9e;
    border-radius: 0 3px 0 0;
    background-color: #f0f8ff;
}
.map {
    width: 100%;
    height: 100%;
    min-height: 0;
    background-color: #f0f8ff;
}
.coord {
    font: 7px "DejaVu Sans", sans-serif;
    fill: #777;
}
.road-name {
    font: 11px "Liberation Sans", sans-serif;
    fill: #222;
}
.jv {
    font: 8px "Liberation Sans", sans-serif;
    fill: #e02020;
}
.note {
    font: 25px Lato, sans-serif;
    fill: #ed1c24;
}
.scale-label {
    font: 7px "DejaVu Sans", sans-serif;
}
.scroll-v, .scroll-h {
    display: flex;
    align-items: center;
    justify-content: space-between;
    background-color: #f0f0f0;
    border: 0 solid #a0a0a0;
}
.scroll-v {
    flex-direction: column;
    border-left-width: 1px;
    padding: 4px 0 3px;
}
.scroll-h {
    grid-column: 1 / 3;
    border-top-width: 1px;
    padding: 0 3px;
}
.scroll-icon {
    width: 10px;
    height: 10px;
}
.thumb {
    background-color: #cdcdcd;
    width: 16px;
    height: 16px;
}
.scroll-v > .thumb {
    margin-top: 14px;
}
.scroll-h > .thumb {
    margin-left: 186px;
}

/* Property panel */
.panel {
    width: 306px;
    flex: none;
    display: flex;
    flex-direction: column;
    border: 2px solid #2d66cc;
    border-top: none;
    border-image: linear-gradient(#86aae6, #2d66cc) 1;
    padding-top: 2px;
    background-color: #c4dafa;
}
.panel-title {
    display: flex;
    align-items: center;
    gap: 5px;
    height: 18px;
    padding: 0 4px 0 2px;
    border: 1px solid #5d7294;
    background-color: #c4dafa;
}
.panel-title h2 {
    flex: 1;
}
.panel-tabs {
    display: flex;
    align-items: flex-end;
    height: 27px;
    padding: 4px 0 0 4px;
    background: linear-gradient(#c4dafa, #86aae4);
    border-bottom: 2px solid #ffd9a0;
    box-shadow: inset 0 -1px 0 #00007b;
}
.panel-tab {
    display: flex;
    align-items: center;
    gap: 5px;
    height: 20px;
    padding: 0 3px 0 4px;
}
.panel-tabs .panel-tab.selected {
    height: 21px;
    border: 1px solid #00007b;
    border-bottom: none;
    background: linear-gradient(#fff3d8, #ffd39b);
}
.with-sep {
    border-left: 1px solid #5f7fb4;
}
.panel-tools {
    display: flex;
    align-items: center;
    gap: 6px;
    height: 23px;
    padding: 0 0 1px 4px;
    background: linear-gradient(#e3effc, #c4dafa);
}
.tool-sep {
    width: 1px;
    height: 17px;
    margin: 0 4px 0 2px;
    background-color: #667;
}
.search {
    display: flex;
    align-items: center;
    width: 157px;
    height: 21px;
    margin-left: -5px;
    border: 1px solid #aaa;
    background-color: #fff;
}
.search input {
    flex: 1;
    min-width: 0;
    border: none;
    padding: 0 0 0 3px;
    font: inherit;
    outline: none;
}
.search input::placeholder {
    color: #555;
}
.list {
    display: flex;
    flex-direction: column;
    height: 135px;
    margin: 0 0 0 1px;
    border: 1px solid #696969;
    background-color: #fff;
}
.list-table {
    width: 100%;
    table-layout: fixed;
    border-collapse: collapse;
}
.list-table th {
    height: 24px;
    padding: 2px 5px 0;
    text-align: left;
    font-weight: normal;
    border: 0 solid #e5ecf5;
    border-width: 0 0 1px 1px;
}
.list-table td {
    height: 17px;
    padding: 0;
    border: 0 solid #f0f0f0;
    border-width: 0 0 1px 1px;
}
.list-table th:first-child, .list-table td:first-child {
    border-left: none;
}
.c-code {
    width: 72px;
}
.c-category {
    width: 99px;
}
.list-scroll {
    height: 16px;
    margin-top: auto;
    border-top: none;
}
.list-scroll > .thumb {
    flex: 1;
    margin: 0 40px 0 4px;
    height: 15px;
}
.splitter {
    display: flex;
    justify-content: center;
    height: 8px;
    padding-top: 1px;
    background-color: #c6c6c6;
}
.splitter button {
    width: 120px;
    display: flex;
    justify-content: center;
    align-items: center;
    border: 1px solid #aaa;
    background-color: #f4f4f4;
}
.props {
    flex: 1;
    min-height: 0;
    border: 1px solid #003399;
    background-color: #aecaf0;
}
.props-table {
    width: 100%;
    table-layout: fixed;
    border-collapse: separate;
    border-spacing: 0;
    border: 1px solid #a0a0a0;
}
.c-name {
    width: 138px;
}
.props-table th {
    height: 19px;
    padding: 0 3px 0 49px;
    text-align: left;
    font-weight: normal;
    white-space: nowrap;
    border-right: 1px solid #a0a0a0;
    border-bottom: 1px dotted #eee;
}
.props-table th label {
    display: block;
    overflow: hidden;
}
.props-table td {
    height: 19px;
    padding: 0 2px;
    color: #00007b;
    border-left: 1px solid #e4ecf6;
    border-bottom: 1px dotted #eee;
}
.props-table .category th {
    height: 22px;
    padding: 0 7px 3px 35px;
    font-weight: bold;
    border-right: none;
    background: linear-gradient(to right, #d2d2d2 60%, #b4b4b4 90%);
}
.category div {
    display: flex;
    align-items: center;
    justify-content: space-between;
}
.chev {
    width: 10px;
    height: 10px;
}
.props-table .check {
    text-align: center;
}
.check input {
    appearance: none;
    display: block;
    width: 11px;
    height: 11px;
    margin: 0 auto;
    border: 1px solid #000;
    background-color: #fff;
}
.check input:checked {
    background-image: linear-gradient(45deg, transparent 25%, #000 25%, #000 60%, transparent 60%), linear-gradient(-45deg, transparent 35%, #000 35%, #000 65%, transparent 65%);
    background-size: 3px 4px, 5px 6px;
    background-position: 1px 4px, 3px 2px;
    background-repeat: no-repeat;
}
.panel-bottom {
    display: flex;
    height: 27px;
    padding: 0 0 3px 5px;
    border-top: 2px solid #ffe5b5;
    background: linear-gradient(#cfe1fb, #8fb2e8);
    box-shadow: inset 0 1px 0 #00007b;
}
.panel-bottom .panel-tab {
    height: 22px;
}
.panel-bottom .selected {
    padding: 0 3px;
    border: 1px solid #00007b;
    border-top: none;
    background: linear-gradient(#ffe9c4, #ffd39b);
}

/* Bottom dock */
.dock-bottom {
    display: flex;
    gap: 4px;
    height: 23px;
    flex: none;
    padding: 2px 0 0 4px;
    border-bottom: 1px solid #b8d2f8;
    background: linear-gradient(to right, #88ace2, #dceafc);
}
.dock-button {
    display: flex;
    align-items: center;
    gap: 5px;
    padding: 0 4px 0 3px;
    border: 1px solid #00007b;
    border-bottom: none;
    background: linear-gradient(#ffb36b, #ff8642);
}

/* Status bar */
.status {
    display: flex;
    gap: 3px;
    height: 23px;
    flex: none;
    padding: 2px 0 0 1px;
    background: linear-gradient(#dceafc, #c4daf8 50%, #8fb2e6);
}
.cell {
    line-height: 20px;
    padding: 0 2px;
    border: 1px solid #6a93cf;
    border-bottom: none;
    white-space: nowrap;
}
.cell-progress {
    width: 181px;
    padding: 1px;
}
.progress {
    height: 18px;
    line-height: 18px;
    text-align: center;
    color: #3296fa;
    border: 2px solid #b8b8b8;
    background: linear-gradient(#ffffff, #e8e8e8 50%, #fafafa);
}
.cell-ready {
    width: 181px;
    padding: 0 1px;
}
.cell-empty {
    width: 51px;
}
.cell-coord {
    width: 151px;
}
.cell-ratio {
    width: 101px;
}
.cell-level {
    width: 151px;
}
.key {
    min-width: 27px;
    text-align: center;
}
.off {
    color: #a4a4a4;
}
```
